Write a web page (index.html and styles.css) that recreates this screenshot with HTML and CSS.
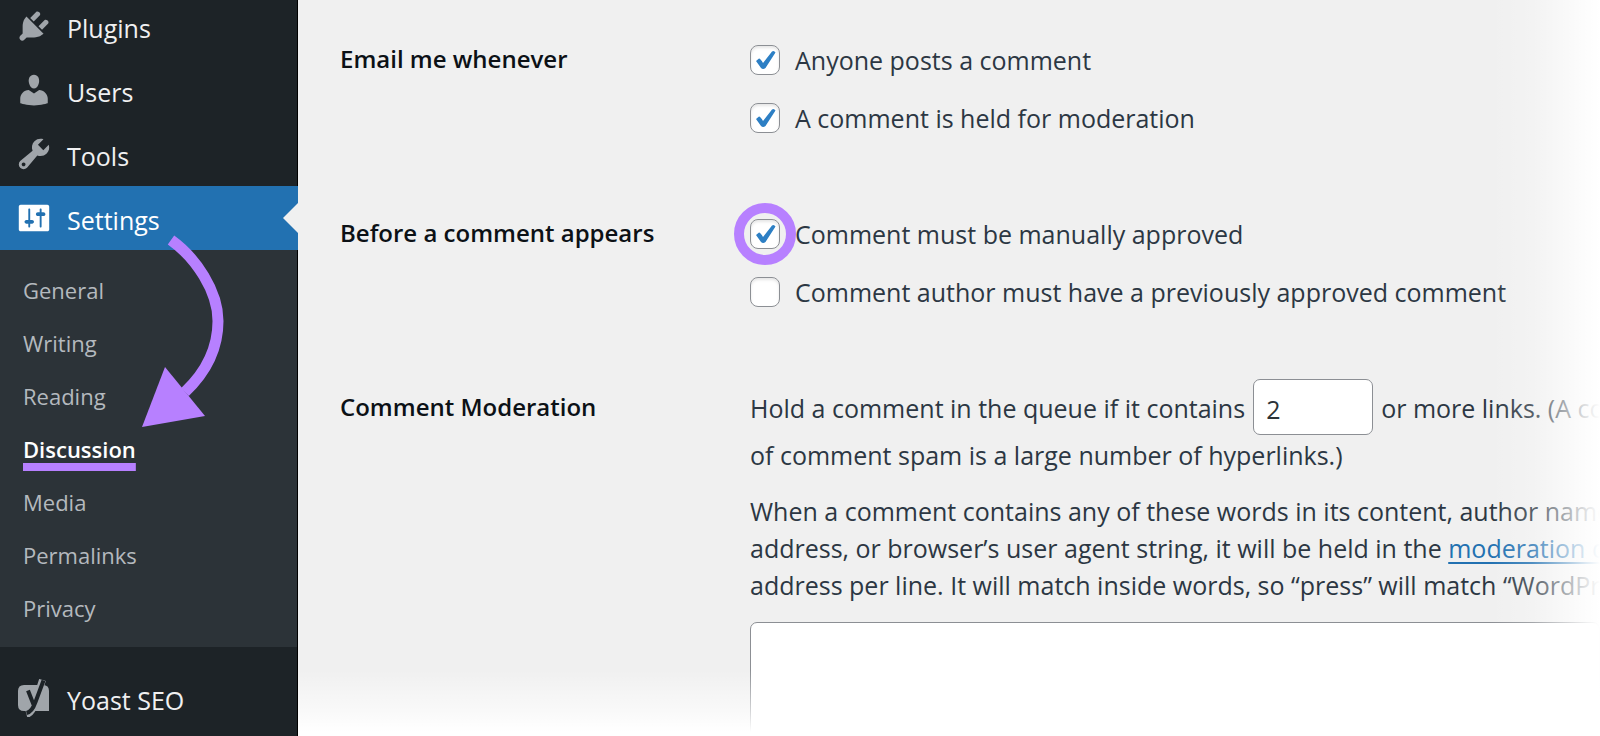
FILE: index.html
```html
<!DOCTYPE html>
<html lang="en">
<head>
<meta charset="utf-8">
<title>Discussion Settings</title>
<link rel="stylesheet" href="styles.css">
</head>
<body>
<div class="app">
  <nav class="sidebar" aria-label="Main menu">
    <ul class="menu">
      <li><a class="menu-item" href="#">
        <svg class="icon" viewBox="0 0 20 20" aria-hidden="true"><path d="M13.11 4.36L9.87 7.6 8 5.73l3.24-3.24c.35-.34 1.05-.2 1.56.32.52.51.66 1.21.31 1.55zm-8 1.77l.91-1.12 9.01 9.01-1.19.84c-.71.71-2.63 1.16-3.82 1.16H6.14L4.9 17.26c-.59.59-1.54.59-2.12 0-.59-.58-.59-1.53 0-2.12l1.24-1.24v-3.88c0-1.13.4-3.19 1.09-3.89zm7.26 3.97l3.24-3.24c.34-.35 1.04-.21 1.55.31.52.51.66 1.21.31 1.55l-3.24 3.25z"/></svg>
        <span>Plugins</span></a></li>
      <li><a class="menu-item" href="#">
        <svg class="icon" viewBox="0 0 20 20" aria-hidden="true"><path d="M10 9.25c-2.27 0-2.73-3.44-2.73-3.44C7 4.02 7.82 2 9.97 2c2.16 0 2.98 2.02 2.71 3.81 0 0-.41 3.44-2.68 3.44zm0 2.57L12.72 10c2.39 0 4.52 2.33 4.52 4.53v2.49s-3.65 1.13-7.24 1.13c-3.65 0-7.24-1.13-7.24-1.13v-2.49c0-2.25 1.94-4.48 4.47-4.48z"/></svg>
        <span>Users</span></a></li>
      <li><a class="menu-item" href="#">
        <svg class="icon" viewBox="0 0 20 20" aria-hidden="true"><path d="M16.68 9.77c-1.34 1.34-3.3 1.67-4.95.99l-5.41 6.52c-.99.99-2.59.99-3.58 0s-.99-2.59 0-3.57l6.52-5.42c-.68-1.65-.35-3.61.99-4.95 1.28-1.28 3.12-1.62 4.72-1.06l-2.89 2.89 2.82 2.82 2.86-2.87c.53 1.58.18 3.39-1.08 4.65zM3.81 16.21c.4.39 1.04.39 1.43 0 .4-.4.4-1.04 0-1.43-.39-.4-1.03-.4-1.43 0-.39.39-.39 1.03 0 1.43z"/></svg>
        <span>Tools</span></a></li>
      <li><a class="menu-item menu-item-active" href="#">
        <svg class="icon" viewBox="0 0 20 20" aria-hidden="true"><path d="M18 16V4c0-.55-.45-1-1-1H3c-.55 0-1 .45-1 1v12c0 .55.45 1 1 1h14c.55 0 1-.45 1-1zM8 11h1c.55 0 1 .45 1 1s-.45 1-1 1H8v1.5c0 .28-.22.5-.5.5s-.5-.22-.5-.5V13H6c-.55 0-1-.45-1-1s.45-1 1-1h1V5.500c0-.28.22-.5.5-.5s.5.22.5.5V11zm5-2h-1c-.55 0-1-.45-1-1s.45-1 1-1h1V5.500c0-.28.22-.5.5-.5s.5.22.5.5V7h1c.55 0 1 .45 1 1s-.45 1-1 1h-1v5.500c0 .28-.22.5-.5.5s-.5-.22-.5-.5V9z"/></svg>
        <span>Settings</span></a>
        <ul class="submenu">
          <li><a class="submenu-item" href="#">General</a></li>
          <li><a class="submenu-item" href="#">Writing</a></li>
          <li><a class="submenu-item" href="#">Reading</a></li>
          <li><a class="submenu-item submenu-item-current" href="#" aria-current="page">Discussion</a></li>
          <li><a class="submenu-item" href="#">Media</a></li>
          <li><a class="submenu-item" href="#">Permalinks</a></li>
          <li><a class="submenu-item" href="#">Privacy</a></li>
        </ul>
      </li>
      <li class="menu-group"><a class="menu-item" href="#">
        <svg class="icon" viewBox="0 0 38 38" aria-hidden="true">
          <path d="M9 6h19q6 0 6 6v20H9q-6 0-6-6V12q0-6 6-6z"/>
          <path class="mark-edge" d="M27.500 1L20 24q-3 10-8.500 11.500"/>
          <path class="mark" d="M28.500 1.500L20.500 23q-3.500 10-9 11M13 11.500l5.500 14"/>
        </svg>
        <span>Yoast SEO</span></a></li>
    </ul>
    <svg class="arrow" viewBox="0 0 80 190" aria-hidden="true">
      <path class="arrow-line" d="M31 3C56 21 78 54 78 84C78 113 64 137 45 155"/>
      <path class="arrow-head" d="M25 130L2 190L65 179z"/>
    </svg>
  </nav>

  <main class="content">
    <form class="settings">
      <h2 class="heading">Email me whenever</h2>
      <div class="field">
        <label class="option"><input class="check" type="checkbox" checked><span>Anyone posts a comment</span></label>
        <label class="option"><input class="check" type="checkbox" checked><span>A comment is held for moderation</span></label>
      </div>

      <h2 class="heading">Before a comment appears</h2>
      <div class="field">
        <label class="option option-marked"><input class="check" type="checkbox" checked><span>Comment must be manually approved</span></label>
        <label class="option"><input class="check" type="checkbox"><span>Comment author must have a previously approved comment</span></label>
      </div>

      <h2 class="heading">Comment Moderation</h2>
      <div class="field">
        <div class="limit">
          <label for="max-links">Hold a comment in the queue if it contains</label>
          <input class="number" id="max-links" type="text" inputmode="numeric" value="2">
          <span>or more links. (A co</span>
        </div>
        <p class="text">of comment spam is a large number of hyperlinks.)</p>
        <p class="text text-words"><label for="words">When a comment contains any of these words in its content, author name<br>
        address, or browser’s user agent string, it will be held in the <a class="link" href="#">moderation q</a><br>
        address per line. It will match inside words, so “press” will match “WordPre</label></p>
        <textarea class="words" id="words"></textarea>
      </div>
    </form>
  </main>
</div>
</body>
</html>
```
FILE: styles.css
```css
* {
  box-sizing: border-box;
}

body {
  margin: 0;
  background: #fff;
  font-family: "Open Sans", "Noto Sans", sans-serif;
  font-size: 25px;
  color: #2c3743;
}

ul {
  margin: 0;
  padding: 0;
  list-style: none;
}

.app {
  display: flex;
  height: 100vh;
  overflow: hidden;
}

/* Sidebar */
.sidebar {
  position: relative;
  flex: none;
  width: 298px;
  background: #1d2327;
  border-right: 1px solid #000;
}

.menu {
  margin-top: -6px;
}

.menu-item {
  position: relative;
  display: flex;
  align-items: center;
  gap: 14px;
  height: 64px;
  padding: 0 15px;
  color: #f0f0f1;
  text-decoration: none;
}

.menu-item span {
  padding-top: 4px;
}

.icon {
  flex: none;
  width: 38px;
  height: 38px;
  fill: #a0a5aa;
}

.mark-edge {
  fill: none;
  stroke: #a0a5aa;
  stroke-width: 7;
}

.mark {
  fill: none;
  stroke: #1d2327;
  stroke-width: 4;
}

.menu-item-active {
  background: #2271b1;
  color: #fff;
  margin-right: -1px;
}

.menu-item-active .icon {
  fill: #fff;
}

.menu-item-active::after {
  content: "";
  position: absolute;
  top: 17px;
  right: 0;
  border: 15px solid transparent;
  border-left-width: 0;
  border-right-color: #f0f0f0;
}

.submenu {
  padding: 14px 0 12px;
  background: #2c3338;
}

.submenu-item {
  display: block;
  padding-left: 23px;
  font-size: 22px;
  line-height: 53px;
  color: #b4b9be;
  text-decoration: none;
}

.submenu-item-current {
  font-weight: 600;
  color: #fff;
  text-decoration: underline #b780ff 8px;
  text-underline-offset: 5px;
  text-decoration-skip-ink: none;
}

.menu-group {
  margin-top: 19px;
}

.arrow {
  position: absolute;
  top: 237px;
  left: 140px;
  width: 80px;
  height: 190px;
  overflow: visible;
}

.arrow-line {
  fill: none;
  stroke: #b780ff;
  stroke-width: 11;
}

.arrow-head {
  fill: #b780ff;
}

/* Content */
.content {
  position: relative;
  flex: 1;
  min-width: 0;
  padding: 31px 0 0 42px;
  background: #f0f0f0;
  overflow: hidden;
}

.content::after {
  content: "";
  position: absolute;
  inset: 0;
  background:
    linear-gradient(to left, #fff 0, rgba(255, 255, 255, 0.85) 14px, rgba(255, 255, 255, 0.6) 34px, rgba(255, 255, 255, 0.2) 68px, transparent 110px),
    linear-gradient(to top, #fff 4px, rgba(255, 255, 255, 0.6) 26px, transparent 66px);
  pointer-events: none;
}

.settings {
  display: grid;
  grid-template-columns: 410px 1fr;
  row-gap: 58px;
  white-space: nowrap;
}

.heading {
  margin: 0;
  font-size: 24px;
  font-weight: 600;
  line-height: 56px;
  color: #0c1116;
}

.field {
  min-width: 0;
}

.option {
  display: flex;
  align-items: center;
  gap: 15px;
  height: 58px;
}

.option-marked {
  position: relative;
}

.option-marked::before {
  content: "";
  position: absolute;
  left: -16px;
  width: 42px;
  height: 42px;
  border: 10px solid #b780ff;
  border-radius: 50%;
}

.option span {
  position: relative;
}

.check {
  appearance: none;
  flex: none;
  display: grid;
  width: 30px;
  height: 30px;
  margin: 0;
  background: #fff;
  border: 1px solid #8c8f94;
  border-radius: 8px;
  box-shadow: inset 0 2px 3px rgba(0, 0, 0, 0.1);
}

.check:checked::before {
  content: "";
  background: #2d7fc4;
  clip-path: path("M5 15L8 12.500Q9.500 12.500 12 17L21 5.500Q23 4 24.500 6.500L14.500 22Q12 24 10 22Z");
}

.limit {
  display: flex;
  gap: 8px;
  height: 58px;
  line-height: 58px;
}

.number {
  flex: none;
  width: 120px;
  height: 56px;
  padding: 4px 12px 0;
  font: inherit;
  color: #2c3338;
  background: #fff;
  border: 1px solid #8c8f94;
  border-radius: 7px;
}

.text {
  margin: 0;
  line-height: 37px;
}

.text-words {
  margin: 19px 0 18px;
}

.link {
  color: #2271b1;
  text-decoration-thickness: 2px;
  text-underline-offset: 4px;
}

.words {
  display: block;
  width: 100%;
  height: 160px;
  background: #fff;
  border: 1px solid #8c8f94;
  border-radius: 7px;
  resize: none;
}
```
